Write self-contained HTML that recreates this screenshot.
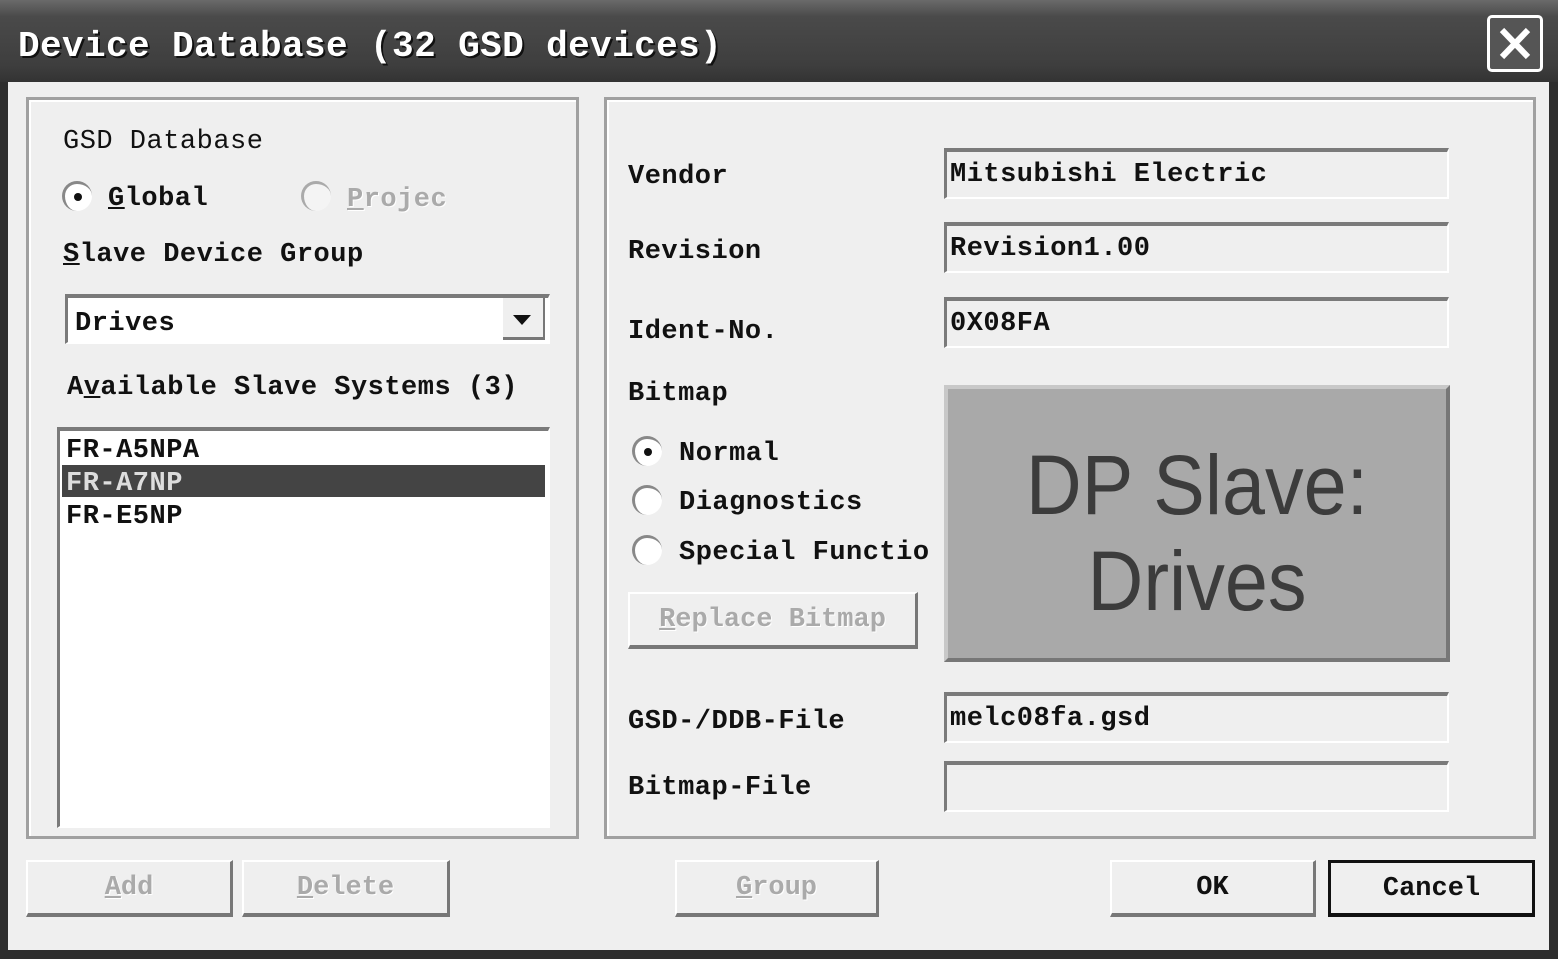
<!DOCTYPE html>
<html><head><style>
*{margin:0;padding:0;box-sizing:border-box}
body{width:1558px;height:959px;background:#2e2e2e;position:relative;overflow:hidden;font-family:"Liberation Mono",monospace;color:#111}
.a{position:absolute}
.t{position:absolute;font-size:27px;line-height:30px;white-space:pre;font-weight:bold;letter-spacing:0.5px;margin-top:3px}
.box{position:absolute;border:3px solid #a0a0a0;box-shadow:inset 2px 2px 0 #fff}
.fld{position:absolute;background:#efefef;border-top:4px solid #7a7a7a;border-left:3px solid #7a7a7a;border-right:2px solid #fff;border-bottom:2px solid #fff}
.btn{position:absolute;background:#efefef;border-top:2px solid #fff;border-left:2px solid #fff;border-right:3px solid #777;border-bottom:4px solid #777;text-align:center;font-size:27px;font-weight:bold;line-height:52px}
.dis{color:#aaa;text-shadow:1px 1px 0 #fff}
.rad{position:absolute;width:30px;height:30px;border-radius:50%;background:#fff;border-left:3px solid #888;border-top:3px solid #888}
.dot{position:absolute;left:9px;top:9px;width:8px;height:8px;background:#111;border-radius:50%}
</style></head><body>
<div class="a" style="left:0;top:0;width:1558px;height:82px;background:linear-gradient(#6a6a6a,#4a4a4a 20%,#3e3e3e 80%,#333)"></div>
<div class="t" style="left:18px;top:24px;font-size:36px;line-height:40px;color:#fff;letter-spacing:0.4px;text-shadow:2px 2px 0 #111">Device Database (32 GSD devices)</div>
<div class="a" style="left:1487px;top:15px;width:56px;height:57px;border:3px solid #fff;border-radius:5px;background:#555"></div>
<svg class="a" style="left:1487px;top:15px" width="56" height="57"><path d="M15 15 L41 42 M41 15 L15 42" stroke="#fff" stroke-width="6"/></svg>
<div class="a" style="left:8px;top:82px;width:1541px;height:868px;background:#efefef"></div>

<div class="box" style="left:26px;top:97px;width:553px;height:742px"></div>
<div class="box" style="left:604px;top:97px;width:932px;height:742px"></div>

<div class="t" style="left:63px;top:124px;font-weight:normal">GSD Database</div>
<div class="rad" style="left:62px;top:181px"><div class="dot"></div></div>
<div class="t" style="left:108px;top:181px"><u>G</u>lobal</div>
<div class="rad" style="left:301px;top:181px;background:#f4f4f4;border-color:#aaa"></div>
<div class="t dis" style="left:347px;top:182px"><u>P</u>rojec</div>
<div class="t" style="left:63px;top:237px"><u>S</u>lave Device Group</div>
<div class="fld" style="left:65px;top:294px;width:485px;height:50px;background:#fff"></div>
<div class="t" style="left:75px;top:306px">Drives</div>
<div class="a" style="left:503px;top:298px;width:42px;height:42px;background:#efefef;border-right:2px solid #777;border-bottom:3px solid #777"></div>
<svg class="a" style="left:512px;top:314px" width="20" height="12"><path d="M1 1H19L10 11Z" fill="#111"/></svg>
<div class="t" style="left:67px;top:370px">A<u>v</u>ailable Slave Systems (3)</div>
<div class="fld" style="left:57px;top:427px;width:493px;height:401px;background:#fff"></div>
<div class="a" style="left:62px;top:465px;width:483px;height:32px;background:#444"></div>
<div class="t" style="left:66px;top:433px">FR-A5NPA</div>
<div class="t" style="left:66px;top:466px;color:#ddd">FR-A7NP</div>
<div class="t" style="left:66px;top:499px">FR-E5NP</div>

<div class="t" style="left:628px;top:159px">Vendor</div>
<div class="t" style="left:628px;top:234px">Revision</div>
<div class="t" style="left:628px;top:314px">Ident-No.</div>
<div class="t" style="left:628px;top:376px">Bitmap</div>
<div class="rad" style="left:632px;top:436px"><div class="dot"></div></div>
<div class="t" style="left:679px;top:436px">Normal</div>
<div class="rad" style="left:632px;top:485px"></div>
<div class="t" style="left:679px;top:485px">Diagnostics</div>
<div class="rad" style="left:632px;top:535px"></div>
<div class="t" style="left:679px;top:535px">Special Functio</div>
<div class="btn dis" style="left:628px;top:592px;width:290px;height:57px"><u>R</u>eplace Bitmap</div>
<div class="t" style="left:628px;top:704px">GSD-/DDB-File</div>
<div class="t" style="left:628px;top:770px">Bitmap-File</div>

<div class="fld" style="left:944px;top:148px;width:505px;height:51px"></div>
<div class="t" style="left:950px;top:157px">Mitsubishi Electric</div>
<div class="fld" style="left:944px;top:222px;width:505px;height:51px"></div>
<div class="t" style="left:950px;top:231px">Revision1.00</div>
<div class="fld" style="left:944px;top:297px;width:505px;height:51px"></div>
<div class="t" style="left:950px;top:306px">0X08FA</div>
<div class="fld" style="left:944px;top:692px;width:505px;height:51px"></div>
<div class="t" style="left:950px;top:701px">melc08fa.gsd</div>
<div class="fld" style="left:944px;top:761px;width:505px;height:51px"></div>

<div class="a" style="left:944px;top:385px;width:506px;height:277px;background:#a9a9a9;border:4px solid #777;border-top-color:#c8c8c8;border-left-color:#c8c8c8"></div>
<div class="a" style="left:944px;top:437px;width:506px;text-align:center;font-family:'Liberation Sans',sans-serif;font-size:84px;line-height:96px;color:#3c3c3c;transform:scaleX(0.92)">DP Slave:<br>Drives</div>

<div class="btn dis" style="left:26px;top:860px;width:207px;height:57px"><u>A</u>dd</div>
<div class="btn dis" style="left:242px;top:860px;width:208px;height:57px"><u>D</u>elete</div>
<div class="btn dis" style="left:675px;top:860px;width:204px;height:57px"><u>G</u>roup</div>
<div class="btn" style="left:1110px;top:860px;width:206px;height:57px">OK</div>
<div class="btn" style="left:1328px;top:860px;width:207px;height:57px;border:3px solid #111;border-bottom-width:4px">Cancel</div>
</body></html>
